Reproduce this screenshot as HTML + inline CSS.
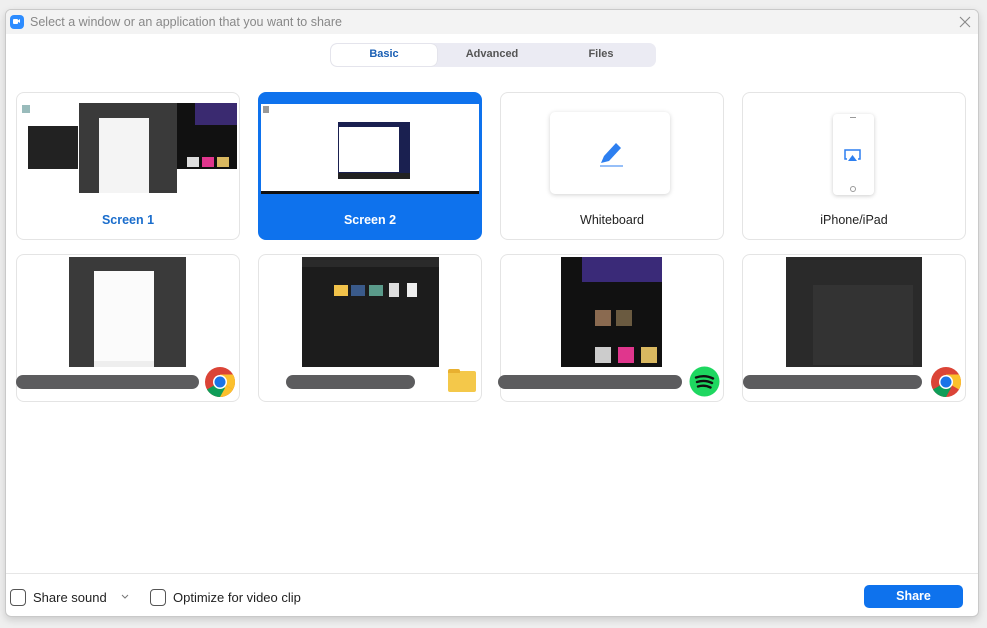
<!DOCTYPE html>
<html><head><meta charset="utf-8">
<style>
*{margin:0;padding:0;box-sizing:border-box}
body{width:987px;height:628px;background:#efefef;font-family:"Liberation Sans",sans-serif;position:relative;overflow:hidden}
.a{position:absolute}
.win{left:5px;top:9px;width:974px;height:608px;background:#fff;border:1px solid #c9c9c9;border-radius:6px;box-shadow:0 3px 8px rgba(0,0,0,.15);overflow:hidden}
.card{position:absolute;width:224px;height:148px;border:1px solid #e4e4e4;border-radius:8px;background:#fff}
.lbl{position:absolute;left:0;right:0;top:120px;text-align:center;font-size:12.5px;color:#222}
.bar{position:absolute;height:14px;background:#5c5c5e;border-radius:7px}
.dk{background:#1f1f1f}
</style></head><body>
<div class="a win">
 <div class="a" style="left:0;top:0;width:974px;height:24px;background:#f3f3f3"></div>
 <div class="a" style="left:4px;top:5px;width:14px;height:14px;background:#2d8cff;border-radius:4px"></div>
 <div class="a" style="left:7px;top:9px;width:5px;height:5px;background:#fff;border-radius:1px"></div>
 <div class="a" style="left:11px;top:9px;width:0;height:0;border-top:2.5px solid transparent;border-bottom:2.5px solid transparent;border-right:3px solid #fff"></div>
 <div class="a" style="left:24px;top:5px;font-size:12.5px;color:#888">Select a window or an application that you want to share</div>
 <svg class="a" style="left:952px;top:5px" width="14" height="14"><path d="M2 2L12 12M12 2L2 12" stroke="#888" stroke-width="1.1"/></svg>
 <div class="a" style="left:324px;top:33px;width:326px;height:24px;background:#ebebf3;border-radius:7px"></div>
 <div class="a" style="left:325px;top:34px;width:106px;height:22px;background:#fff;border-radius:6px;box-shadow:0 0 1px rgba(0,0,0,.2)"></div>
 <div class="a" style="left:325px;top:38px;width:106px;text-align:center;font-size:11px;font-weight:bold;color:#1a5fb4">Basic</div>
 <div class="a" style="left:435px;top:38px;width:102px;text-align:center;font-size:11px;font-weight:bold;color:#555">Advanced</div>
 <div class="a" style="left:545px;top:38px;width:100px;text-align:center;font-size:11px;font-weight:bold;color:#555">Files</div>
</div>

<!-- row 1 -->
<div class="card" style="left:16px;top:92px">
 <div class="a" style="left:1px;top:10px;width:219px;height:92px;background:#fff"></div>
 <div class="a" style="left:5px;top:12px;width:8px;height:8px;background:#9bb"></div>
 <div class="a dk" style="left:11px;top:33px;width:50px;height:43px;background:#222"></div>
 <div class="a" style="left:62px;top:10px;width:98px;height:90px;background:#3a3a3a"></div>
 <div class="a" style="left:82px;top:25px;width:50px;height:75px;background:#f4f4f4"></div>
 <div class="a" style="left:160px;top:10px;width:60px;height:66px;background:#111"></div>
 <div class="a" style="left:178px;top:10px;width:42px;height:22px;background:#3a2a70"></div>
 <div class="a" style="left:170px;top:64px;width:12px;height:10px;background:#ddd"></div>
 <div class="a" style="left:185px;top:64px;width:12px;height:10px;background:#e0368d"></div>
 <div class="a" style="left:200px;top:64px;width:12px;height:10px;background:#d9b860"></div>
 <div class="lbl" style="color:#1a6dcc;font-weight:bold;top:120px">Screen 1</div>
</div>
<div class="card" style="left:258px;top:92px;background:#0e72ed;border-color:#0e72ed">
 <div class="a" style="left:2px;top:11px;width:218px;height:89px;background:#fff"></div>
 <div class="a" style="left:2px;top:98px;width:218px;height:3px;background:#111"></div>
 <div class="a" style="left:4px;top:13px;width:6px;height:7px;background:#999"></div>
 <div class="a" style="left:79px;top:29px;width:72px;height:57px;background:#1a2050"></div>
 <div class="a" style="left:80px;top:34px;width:60px;height:45px;background:#fff"></div>
 <div class="a" style="left:79px;top:80px;width:72px;height:6px;background:#222"></div>
 <div class="lbl" style="color:#fff;font-weight:bold">Screen 2</div>
</div>
<div class="card" style="left:500px;top:92px">
 <div class="a" style="left:49px;top:19px;width:120px;height:82px;background:#fff;border-radius:5px;box-shadow:0 1px 5px rgba(0,0,0,.18)"></div>
 <svg class="a" style="left:96px;top:46px" width="30" height="30"><path d="M4 24L7 17L19 4L24 9L12 22Z" fill="#2d7ff0"/><path d="M3 27H26" stroke="#2d7ff0" stroke-width="1"/></svg>
 <div class="lbl">Whiteboard</div>
</div>
<div class="card" style="left:742px;top:92px">
 <div class="a" style="left:90px;top:21px;width:41px;height:81px;background:#fff;border-radius:4px;box-shadow:0 1px 4px rgba(0,0,0,.2)"></div>
 <div class="a" style="left:107px;top:24px;width:6px;height:1px;background:#999"></div>
 <svg class="a" style="left:100px;top:55px" width="20" height="16"><path d="M4 11H2V2H17V11H15" fill="none" stroke="#2d7ff0" stroke-width="1.5"/><path d="M5 13L9.5 7L14 13Z" fill="#2d7ff0"/></svg>
 <div class="a" style="left:107px;top:93px;width:6px;height:6px;border:1px solid #999;border-radius:50%"></div>
 <div class="lbl">iPhone/iPad</div>
</div>

<!-- row 2 -->
<div class="card" style="left:16px;top:254px">
 <div class="a" style="left:52px;top:2px;width:117px;height:110px;background:#3a3a3a"></div>
 <div class="a" style="left:77px;top:16px;width:60px;height:90px;background:#fbfbfb"></div>
 <div class="a" style="left:77px;top:106px;width:60px;height:6px;background:#eee"></div>
</div>
<div class="bar" style="left:16px;top:375px;width:183px"></div>
<svg class="a" style="left:204px;top:366px" width="32" height="32" viewBox="0 0 32 32"><circle cx="16" cy="16" r="15" fill="#db4437"/><path d="M16 16L29 23.5A15 15 0 0 1 16 31Z" fill="#fbc02d"/><path d="M16 16L3 23.5A15 15 0 0 0 16 31L21 22Z" fill="#0f9d58"/><path d="M16 16L29 23.5A15 15 0 0 0 29 8.5L16 8.5Z" fill="#fbc02d"/><circle cx="16" cy="16" r="7" fill="#fff"/><circle cx="16" cy="16" r="5.5" fill="#1a73e8"/></svg>

<div class="card" style="left:258px;top:254px">
 <div class="a" style="left:43px;top:2px;width:137px;height:110px;background:#1c1c1c"></div>
 <div class="a" style="left:43px;top:2px;width:137px;height:10px;background:#2a2a2a"></div>
 <div class="a" style="left:75px;top:30px;width:14px;height:11px;background:#f1c24a"></div>
 <div class="a" style="left:92px;top:30px;width:14px;height:11px;background:#3a5a8a"></div>
 <div class="a" style="left:110px;top:30px;width:14px;height:11px;background:#5a9a8a"></div>
 <div class="a" style="left:130px;top:28px;width:10px;height:14px;background:#ddd"></div>
 <div class="a" style="left:148px;top:28px;width:10px;height:14px;background:#eee"></div>
</div>
<div class="bar" style="left:286px;top:375px;width:129px"></div>
<div class="a" style="left:448px;top:371px;width:28px;height:21px;background:#f4c84a;border-radius:2px"></div>
<div class="a" style="left:448px;top:369px;width:12px;height:4px;background:#e8b030;border-radius:2px 2px 0 0"></div>

<div class="card" style="left:500px;top:254px">
 <div class="a" style="left:60px;top:2px;width:101px;height:110px;background:#111"></div>
 <div class="a" style="left:81px;top:2px;width:80px;height:25px;background:#3a2a78"></div>
 <div class="a" style="left:94px;top:55px;width:16px;height:16px;background:#8a6a50"></div>
 <div class="a" style="left:115px;top:55px;width:16px;height:16px;background:#6a5a40"></div>
 <div class="a" style="left:94px;top:92px;width:16px;height:16px;background:#ccc"></div>
 <div class="a" style="left:117px;top:92px;width:16px;height:16px;background:#e0368d"></div>
 <div class="a" style="left:140px;top:92px;width:16px;height:16px;background:#d9b860"></div>
</div>
<div class="bar" style="left:498px;top:375px;width:184px"></div>
<svg class="a" style="left:689px;top:366px" width="31" height="31" viewBox="0 0 31 31"><circle cx="15.5" cy="15.5" r="15" fill="#1ed760"/><path d="M7 11.5Q16 8.5 24 12.5M8 16Q16 13.5 23 17M9 20.5Q15.5 18.5 21.5 21.5" fill="none" stroke="#111" stroke-width="2.4" stroke-linecap="round"/></svg>

<div class="card" style="left:742px;top:254px">
 <div class="a" style="left:43px;top:2px;width:136px;height:110px;background:#2a2a2a"></div>
 <div class="a" style="left:70px;top:30px;width:100px;height:80px;background:#333"></div>
</div>
<div class="bar" style="left:743px;top:375px;width:179px"></div>
<svg class="a" style="left:930px;top:366px" width="32" height="32" viewBox="0 0 32 32"><circle cx="16" cy="16" r="15" fill="#db4437"/><path d="M16 16L3 23.5A15 15 0 0 0 16 31L21 22Z" fill="#0f9d58"/><path d="M16 16L29 23.5A15 15 0 0 0 29 8.5L16 8.5Z" fill="#fbc02d"/><circle cx="16" cy="16" r="7" fill="#fff"/><circle cx="16" cy="16" r="5.5" fill="#1a73e8"/></svg>

<!-- footer -->
<div class="a" style="left:6px;top:573px;width:972px;height:1px;background:#e6e6e6"></div>
<div class="a" style="left:10px;top:589px;width:16px;height:17px;border:1px solid #555;border-radius:4px"></div>
<div class="a" style="left:33px;top:590px;font-size:13px;color:#222">Share sound</div>
<svg class="a" style="left:121px;top:594px" width="8" height="6"><path d="M1 1L4 4L7 1" fill="none" stroke="#777"/></svg>
<div class="a" style="left:150px;top:589px;width:16px;height:17px;border:1px solid #555;border-radius:4px"></div>
<div class="a" style="left:173px;top:590px;font-size:13px;color:#222">Optimize for video clip</div>
<div class="a" style="left:864px;top:585px;width:99px;height:23px;background:#0e72ed;border-radius:5px;color:#fff;font-size:12.5px;font-weight:bold;text-align:center;line-height:23px">Share</div>
</body></html>
